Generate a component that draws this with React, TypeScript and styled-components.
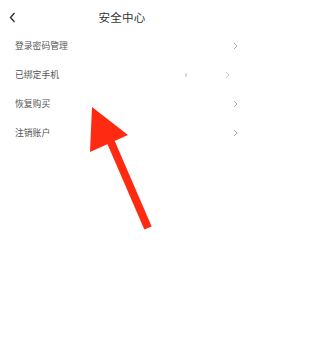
import React from "react";
import styled, { createGlobalStyle } from "styled-components";

const GlobalStyle = createGlobalStyle`
  html, body {
    margin: 0;
    padding: 0;
    background: #ffffff;
  }
  body {
    font-family: "Noto Sans CJK SC", "Noto Sans", sans-serif;
  }
`;

const Page = styled.div`
  position: relative;
  width: 244px;
  height: 364px;
  background: #fff;
  overflow: hidden;
`;

const Header = styled.div`
  display: grid;
  grid-template-columns: 30px 1fr 30px;
  align-items: center;
  height: 31px;
  padding-top: 3px;
  box-sizing: border-box;
`;

const BackButton = styled.div`
  display: flex;
  align-items: center;
  padding-left: 9px;
`;

const Title = styled.div`
  text-align: center;
  font-size: 11.5px;
  color: #333;
  letter-spacing: 0.3px;
`;

const List = styled.div`
  display: flex;
  flex-direction: column;
`;

const Row = styled.div`
  display: flex;
  align-items: center;
  height: 29px;
  padding: 0 6px 0 15px;
`;

const Label = styled.span`
  flex: 1;
  font-size: 8.8px;
  color: #555;
`;

const Extra = styled.span`
  display: flex;
  align-items: center;
  gap: 38px;
  margin-right: 8px;
`;

const MaskDot = styled.span`
  width: 2px;
  height: 4px;
  border-radius: 1px;
  background: #d4d4d4;
`;

const Overlay = styled.svg`
  position: absolute;
  left: 0;
  top: 0;
  pointer-events: none;
`;

const Chevron = ({ color = "#aaa" }: { color?: string }) => (
  <svg width="5" height="8" viewBox="0 0 5 8">
    <path d="M1 1 L4 4 L1 7" fill="none" stroke={color} strokeWidth="1" />
  </svg>
);

const items = [
  { label: "登录密码管理" },
  { label: "已绑定手机", masked: true },
  { label: "恢复购买" },
  { label: "注销账户" },
];

const App = () => {
  return (
    <Page>
      <GlobalStyle />
      <Header>
        <BackButton>
          <svg width="7" height="11" viewBox="0 0 7 11">
            <path
              d="M5.5 1 L1.5 5.5 L5.5 10"
              fill="none"
              stroke="#333"
              strokeWidth="1.4"
            />
          </svg>
        </BackButton>
        <Title>安全中心</Title>
        <span />
      </Header>
      <List>
        {items.map((item) => (
          <Row key={item.label}>
            <Label>{item.label}</Label>
            {item.masked ? (
              <Extra>
                <MaskDot />
                <Chevron color="#cfcfcf" />
              </Extra>
            ) : (
              <Chevron />
            )}
          </Row>
        ))}
      </List>
      <Overlay width="244" height="364" viewBox="0 0 244 364">
        <line
          x1="110"
          y1="140"
          x2="148"
          y2="228"
          stroke="#ff2a12"
          strokeWidth="8"
        />
        <polygon points="92,107 128,135 90,152" fill="#ff2a12" />
      </Overlay>
    </Page>
  );
};

export default App;
